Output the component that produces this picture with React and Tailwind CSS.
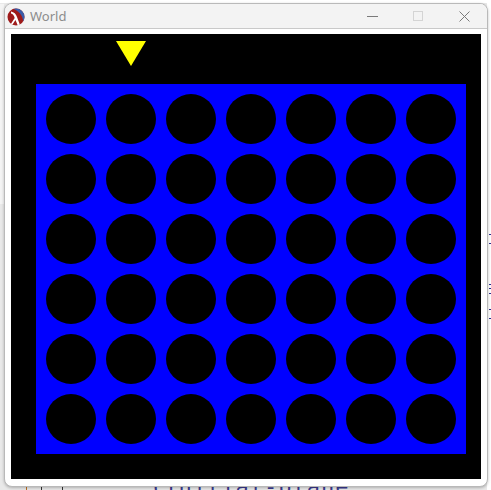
import React from "react";

function RacketLogo() {
  return (
    <svg width="18" height="18" viewBox="0 0 18 18">
      <defs>
        <clipPath id="c">
          <circle cx="9" cy="9" r="8.5" />
        </clipPath>
      </defs>
      <g clipPath="url(#c)">
        <rect x="0" y="0" width="18" height="18" fill="#9e1b1b" />
        <path d="M3 0 C10 1 15 6 16 12 C16.5 15 17 17 18 18 L18 0 Z" fill="#3a5dab" />
        <path d="M4 3.5 C7 4 9 6 10 9 L13 17 L11 18 L8.5 12 L4.5 18 L2.5 18 L7.7 10 C7 7.5 6 6 4 5.5 Z" fill="#ffffff" />
      </g>
    </svg>
  );
}

export default function App() {
  const rows = [0, 1, 2, 3, 4, 5];
  const cols = [0, 1, 2, 3, 4, 5, 6];
  return (
    <div
      className="relative w-[491px] h-[490px] overflow-hidden bg-[#e9e9e9]"
      style={{ fontFamily: "'Noto Sans', 'Open Sans', sans-serif" }}
    >
      {/* background fragments behind the window */}
      <div className="absolute left-[487px] top-0 w-[4px] h-[490px] bg-white">
        <div className="absolute left-[2px] top-[234px] w-[3px] h-[1px] bg-[#2b2b8f]" />
        <div className="absolute left-[2px] top-[243px] w-[3px] h-[1px] bg-[#2b2b8f]" />
        <div className="absolute left-[2px] top-[284px] w-[3px] h-[1px] bg-[#2b2b8f]" />
        <div className="absolute left-[2px] top-[288px] w-[3px] h-[1px] bg-[#2b2b8f]" />
        <div className="absolute left-[2px] top-[293px] w-[3px] h-[1px] bg-[#2b2b8f]" />
        <div className="absolute left-[2px] top-[309px] w-[3px] h-[1px] bg-[#2b2b8f]" />
        <div className="absolute left-[2px] top-[318px] w-[3px] h-[1px] bg-[#2b2b8f]" />
      </div>
      <div className="absolute left-0 top-0 w-[491px] h-[3px] bg-white" />
      <div className="absolute left-0 top-[4px] w-[4px] h-[200px] bg-[#f4f4f4]" />
      <div
        className="absolute left-[150px] top-[476px] text-[22px] leading-none text-[#3b3b8f] tracking-[1px]"
        style={{ fontFamily: "'DejaVu Sans Mono', monospace" }}
      >
        (initial-plane
      </div>
      <div className="absolute left-[26px] top-[486px] w-[1px] h-[4px] bg-[#c07020]" />
      <div className="absolute left-[41px] top-[486px] w-[1px] h-[4px] bg-[#333]" />
      <div className="absolute left-[62px] top-[486px] w-[1px] h-[4px] bg-[#333]" />

      {/* window */}
      <div className="absolute left-[4px] top-[3px] w-[484px] h-[484px] flex flex-col rounded-[8px] border border-[#b9b9b9] bg-white overflow-hidden shadow-[0_1px_3px_rgba(0,0,0,0.25)]">
        <div className="h-[25px] shrink-0 flex items-center bg-[#f3f3f3] border-b border-[#c9c9c9]">
          <div className="ml-[2px] mt-[1px] flex items-center">
            <RacketLogo />
          </div>
          <div className="ml-[5px] text-[13px] text-[#8c8c8c] leading-none">World</div>
          <div className="flex-1" />
          <div className="w-[46px] flex justify-center">
            <div className="w-[11px] h-[1px] bg-[#7a7a7a]" />
          </div>
          <div className="w-[46px] flex justify-center">
            <div className="w-[10px] h-[10px] border border-[#d4d4d4]" />
          </div>
          <div className="w-[46px] flex justify-center">
            <svg width="11" height="11" viewBox="0 0 11 11">
              <path d="M0.5 0.5 L10.5 10.5 M10.5 0.5 L0.5 10.5" stroke="#7a7a7a" strokeWidth="1" />
            </svg>
          </div>
        </div>
        <div className="flex-1 pl-[6px] pt-[5px]">
          <div className="w-[470px] h-[445px] bg-black flex flex-col">
            <div className="h-[50px] pl-[105px] pt-[7px]">
              <svg width="30" height="25" viewBox="0 0 30 25">
                <polygon points="0,0 30,0 15,25" fill="#ffff00" />
              </svg>
            </div>
            <div className="ml-[25px] w-[430px] h-[370px] bg-[#0000ff] p-[10px] flex flex-col gap-[10px]">
              {rows.map((r) => (
                <div key={r} className="flex gap-[10px]">
                  {cols.map((c) => (
                    <div key={c} className="w-[50px] h-[50px] rounded-full bg-black" />
                  ))}
                </div>
              ))}
            </div>
          </div>
        </div>
      </div>
    </div>
  );
}
